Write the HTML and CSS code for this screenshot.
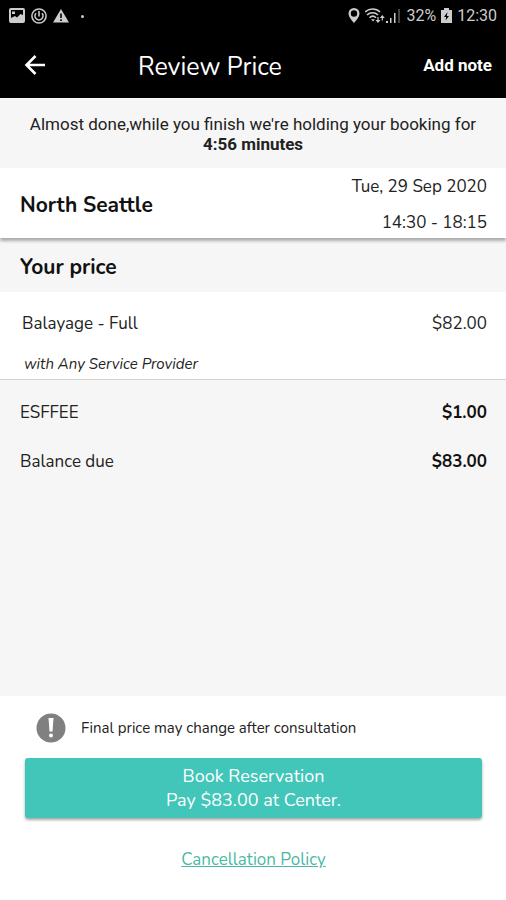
FILE: index.html
```html
<!DOCTYPE html>
<html lang="en">
<head>
  <meta charset="UTF-8" />
  <meta name="viewport" content="width=device-width, initial-scale=1.0"/>
  <title>Review Price</title>
  <link rel="stylesheet" href="styles.css">
</head>
<body>
  <div class="status-bar">
    <div class="status-left">
      <svg width="16" height="16" viewBox="0 0 16 16">
        <rect x="1" y="1" width="14" height="13" rx="1" fill="none" stroke="#ccc" stroke-width="2"/>
        <path d="M2 10l4-2 2 1.500 3.500-3.500 2.500 1v7H2z" fill="#ccc"/>
        <rect x="3" y="3.500" width="3" height="2.500" fill="#ccc"/>
      </svg>
      <svg width="16" height="16" viewBox="0 0 16 16" fill="none" stroke="#ccc">
        <circle cx="8" cy="8" r="7.100" stroke-width="1.500"/>
        <path d="M5 5.200a4 4 0 1 0 6 0" stroke-width="1.600"/>
        <path d="M8 3v5.500" stroke-width="1.600"/>
      </svg>
      <svg width="16" height="16" viewBox="0 0 16 16">
        <path d="M8 1l8 13.500H0z" fill="#ccc"/>
        <path d="M8 5.500v4.500M8 11.300v1.700" stroke="#000" stroke-width="1.600"/>
      </svg>
      <span class="dot"></span>
    </div>
    <div class="status-right">
      <svg width="12" height="16" viewBox="0 0 12 16">
        <path d="M6 0a5.500 5.500 0 0 0-5.500 5.500c0 4 5.500 9.500 5.500 9.500s5.500-5.500 5.500-9.500A5.500 5.500 0 0 0 6 0zm0 2.300a3.200 3.200 0 1 1 0 6.400 3.200 3.200 0 0 1 0-6.400z" fill="#ccc" fill-rule="evenodd"/>
      </svg>
      <svg class="wifi" width="20" height="16" viewBox="0 0 20 16" fill="none" stroke="#ccc" stroke-width="1.600">
        <path d="M0 4c4-4 11-4 15 0M2 7c3-3 8-3 11 0M4.500 9.700c2-2 4.500-2 6.500 0"/>
        <path d="M6 11.300h4L8 13.500z" fill="#ccc" stroke="none"/>
        <path d="M10.500 12h5L13 15zM14.800 10h5l-2.500-3z" fill="#ccc" stroke="none"/>
        <path d="M13 9v4M17.300 9v3.500" stroke-width="1.200"/>
      </svg>
      <svg width="15" height="16" viewBox="0 0 15 16" fill="#ccc">
        <path d="M0 13h2v2H0zM4 10h1.500v5H4zM8 5h1.500v10H8z"/>
        <path d="M12 1h2v14h-2z" fill="#444"/>
      </svg>
      <span>32%</span>
      <svg width="11" height="16" viewBox="0 0 11 16">
        <path d="M3 0h5v2h3v13H0V2h3z" fill="#ccc"/>
        <path d="M6.500 4L3 9h2.200L4.500 12.500 8 8H5.800z" fill="#000"/>
      </svg>
      <span>12:30</span>
    </div>
  </div>

  <header class="header">
    <button type="button" class="back" aria-label="Back">
      <svg width="22" height="20" viewBox="0 0 22 20" fill="none" stroke="#fff" stroke-width="2.600">
        <path d="M21 10H3M11.500 1L2.500 10l9 9"/>
      </svg>
    </button>
    <h1>Review Price</h1>
    <button type="button" class="add-note">Add note</button>
  </header>

  <p class="notice">
    Almost done,while you finish we're holding your booking for
    <strong>4:56 minutes</strong>
  </p>

  <section class="location">
    <h2>North Seattle</h2>
    <div class="when">
      <span>Tue, 29 Sep 2020</span>
      <span>14:30 - 18:15</span>
    </div>
  </section>

  <main class="prices">
    <h2 class="price-title">Your price</h2>
    <div class="service">
      <div class="row">
        <span>Balayage - Full</span>
        <span>$82.00</span>
      </div>
      <p class="provider">with Any Service Provider</p>
    </div>
    <div class="totals">
      <div class="row">
        <span>ESFFEE</span>
        <strong>$1.00</strong>
      </div>
      <div class="row">
        <span>Balance due</span>
        <strong>$83.00</strong>
      </div>
    </div>
  </main>

  <footer class="footer">
    <div class="info">
      <svg width="30" height="30" viewBox="0 0 30 30">
        <circle cx="15" cy="15" r="14.500" fill="#808080"/>
        <path d="M12.500 5h5l-1 13.500h-3z" fill="#fff"/>
        <circle cx="15" cy="22.500" r="2" fill="#fff"/>
      </svg>
      <span>Final price may change after consultation</span>
    </div>
    <button type="button" class="book">Book Reservation<br>Pay $83.00 at Center.</button>
    <a href="#" class="policy">Cancellation Policy</a>
  </footer>
</body>
</html>
```

FILE: styles.css
```css
* {
  box-sizing: border-box;
}
body {
  display: flex;
  flex-direction: column;
  min-height: 100vh;
  margin: 0;
  font-family: Nunito, 'Noto Sans', sans-serif;
  font-size: 17px;
  line-height: 24px;
  color: #222;
  background: #f6f6f6;
}
h1, h2, p {
  margin: 0;
}
button {
  padding: 0;
  border: none;
  background: none;
  color: white;
  font-family: inherit;
  cursor: pointer;
}
svg {
  display: block;
}
.status-bar {
  display: flex;
  justify-content: space-between;
  align-items: center;
  height: 32px;
  padding: 0 9px;
  background: #000;
  color: #ccc;
  font-family: Roboto, sans-serif;
  font-size: 16px;
}
.status-left {
  display: flex;
  align-items: center;
  gap: 6px;
}
.dot {
  width: 3px;
  height: 3px;
  margin-left: 6px;
  border-radius: 50%;
  background: #ccc;
}
.status-right {
  display: flex;
  align-items: center;
  gap: 5px;
}
.wifi {
  margin-right: -4px;
}
.header {
  display: grid;
  grid-template-columns: 114px 1fr auto;
  align-items: center;
  height: 66px;
  padding: 0 14px 0 24px;
  background: #000;
  color: white;
}
.back {
  justify-self: start;
}
.header h1 {
  padding-top: 4px;
  font-size: 25px;
  font-weight: 400;
}
.add-note {
  font-family: Roboto, sans-serif;
  font-size: 17px;
  font-weight: 700;
}
.notice {
  padding: 16px 20px 14px;
  text-align: center;
  font-family: Roboto, sans-serif;
  font-size: 17px;
  line-height: 20px;
}
.notice strong {
  display: block;
  font-weight: 700;
}
.location {
  display: flex;
  justify-content: space-between;
  align-items: center;
  padding: 7px 19px 3px 20px;
  background: white;
  box-shadow: 0 3px 3px rgba(0, 0, 0, 0.3);
}
h2 {
  font-size: 21px;
  font-weight: 700;
  color: #111;
}
.when {
  display: flex;
  flex-direction: column;
  gap: 12px;
  text-align: right;
}
.prices {
  flex: 1;
}
.price-title {
  padding: 17px 20px 13px;
}
.service {
  padding: 20px 0 3px;
  background: white;
  border-bottom: 1px solid #d4d4d4;
}
.row {
  display: flex;
  justify-content: space-between;
  padding: 0 19px 0 20px;
}
.service .row {
  padding-left: 22px;
}
.provider {
  padding: 16px 24px 0;
  font-size: 15px;
  font-style: italic;
}
.totals {
  display: flex;
  flex-direction: column;
  gap: 25px;
  padding: 21px 0;
}
.totals strong {
  color: #111;
}
.footer {
  display: flex;
  flex-direction: column;
  padding: 17px 24px 28px 25px;
  background: white;
}
.info {
  display: flex;
  align-items: center;
  gap: 15px;
  padding: 0 11px;
  font-size: 15px;
}
.book {
  margin: 15px 0 30px;
  padding: 6px;
  border-radius: 3px;
  background: #41c6b9;
  box-shadow: 0 2px 3px rgba(0, 0, 0, 0.35);
  font-size: 18px;
  line-height: 24px;
}
.policy {
  align-self: center;
  color: #4bb9a3;
}
```
